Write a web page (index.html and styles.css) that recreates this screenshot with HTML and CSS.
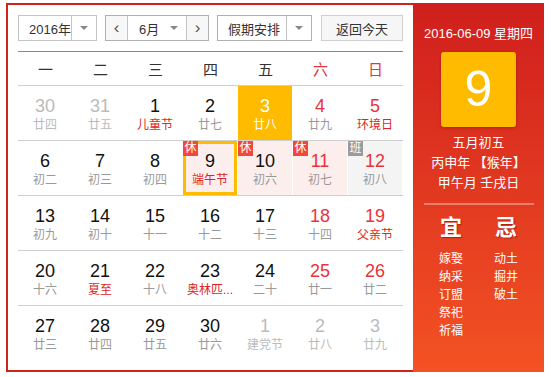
FILE: index.html
```html
<!DOCTYPE html>
<html lang="zh-CN">
    <head>
        <meta charset="utf-8">
        <title>万年历</title>
        <link rel="stylesheet" href="styles.css">
    </head>
    <body>
        <div class="calendar">
            <div class="main">
                <div class="toolbar">
                    <div class="select year">
                        <span class="select-text">2016年</span>
                        <span class="select-arrow"><i></i></span>
                    </div>
                    <div class="month-group">
                        <span class="nav-btn">&lsaquo;</span>
                        <div class="select month">
                            <span class="select-text">6月</span>
                            <span class="select-arrow plain"><i></i></span>
                        </div>
                        <span class="nav-btn">&rsaquo;</span>
                    </div>
                    <div class="select holiday">
                        <span class="select-text">假期安排</span>
                        <span class="select-arrow"><i></i></span>
                    </div>
                    <span class="today-btn">返回今天</span>
                </div>

                <div class="week-head">
                    <span>一</span><span>二</span><span>三</span><span>四</span><span>五</span>
                    <span class="red">六</span><span class="red">日</span>
                </div>

                <div class="week">
                    <div class="day other"><b>30</b><em>廿四</em></div>
                    <div class="day other"><b>31</b><em>廿五</em></div>
                    <div class="day"><b>1</b><em class="fest">儿童节</em></div>
                    <div class="day"><b>2</b><em>廿七</em></div>
                    <div class="day today"><b>3</b><em>廿八</em></div>
                    <div class="day weekend"><b>4</b><em>廿九</em></div>
                    <div class="day weekend"><b>5</b><em class="fest">环境日</em></div>
                </div>
                <div class="week">
                    <div class="day"><b>6</b><em>初二</em></div>
                    <div class="day"><b>7</b><em>初三</em></div>
                    <div class="day"><b>8</b><em>初四</em></div>
                    <div class="day rest selected"><span class="tag">休</span><b>9</b><em class="fest">端午节</em></div>
                    <div class="day rest"><span class="tag">休</span><b>10</b><em>初六</em></div>
                    <div class="day rest weekend"><span class="tag">休</span><b>11</b><em>初七</em></div>
                    <div class="day work weekend"><span class="tag gray">班</span><b>12</b><em>初八</em></div>
                </div>
                <div class="week">
                    <div class="day"><b>13</b><em>初九</em></div>
                    <div class="day"><b>14</b><em>初十</em></div>
                    <div class="day"><b>15</b><em>十一</em></div>
                    <div class="day"><b>16</b><em>十二</em></div>
                    <div class="day"><b>17</b><em>十三</em></div>
                    <div class="day weekend"><b>18</b><em>十四</em></div>
                    <div class="day weekend"><b>19</b><em class="fest">父亲节</em></div>
                </div>
                <div class="week">
                    <div class="day"><b>20</b><em>十六</em></div>
                    <div class="day"><b>21</b><em class="fest">夏至</em></div>
                    <div class="day"><b>22</b><em>十八</em></div>
                    <div class="day"><b>23</b><em class="fest">奥林匹...</em></div>
                    <div class="day"><b>24</b><em>二十</em></div>
                    <div class="day weekend"><b>25</b><em>廿一</em></div>
                    <div class="day weekend"><b>26</b><em>廿二</em></div>
                </div>
                <div class="week last">
                    <div class="day"><b>27</b><em>廿三</em></div>
                    <div class="day"><b>28</b><em>廿四</em></div>
                    <div class="day"><b>29</b><em>廿五</em></div>
                    <div class="day"><b>30</b><em>廿六</em></div>
                    <div class="day other"><b>1</b><em>建党节</em></div>
                    <div class="day other"><b>2</b><em>廿八</em></div>
                    <div class="day other"><b>3</b><em>廿九</em></div>
                </div>
            </div>

            <div class="side">
                <p class="side-date">2016-06-09 星期四</p>
                <div class="big-day">9</div>
                <p class="lunar">五月初五</p>
                <p class="lunar">丙申年 【猴年】</p>
                <p class="lunar">甲午月 壬戌日</p>
                <hr class="side-line">
                <div class="yiji">
                    <div class="yiji-col">
                        <h3>宜</h3>
                        <p>嫁娶</p><p>纳采</p><p>订盟</p><p>祭祀</p><p>祈福</p>
                    </div>
                    <div class="yiji-col">
                        <h3>忌</h3>
                        <p>动土</p><p>掘井</p><p>破土</p>
                    </div>
                </div>
            </div>
        </div>
    </body>
</html>
```

FILE: styles.css
```css
body{margin: 0; background: #fff; font-family: "Liberation Sans", "Noto Sans CJK SC", sans-serif; color: #333;}
p, h3{margin: 0;}

.calendar{display: flex; width: 538px; height: 369px; margin: 3px 0 0 6px; border: 2px solid #d0211b; box-sizing: border-box; box-shadow: 0 5px 0 #f4f4f4;}
.main{width: 385px; padding: 10px 10px 0 10px;}

/* toolbar */
.toolbar{display: flex; align-items: stretch; height: 26px; padding-bottom: 10px; border-bottom: 1px solid #e8625a;}
.select{display: flex; border: 1px solid #c4c4c4; box-sizing: border-box; font-size: 13px; color: #333; background: #fff;}
.select-text{flex: 1; display: flex; align-items: center; padding-left: 10px;}
.select-arrow{width: 24px; border-left: 1px solid #c4c4c4; display: flex; align-items: center; justify-content: center;}
.select-arrow.plain{border-left: none;}
.select-arrow i{width: 0; height: 0; border-left: 4px solid transparent; border-right: 4px solid transparent; border-top: 4px solid #888;}
.year{width: 79px;}
.month-group{display: flex; margin-left: 8px; border: 1px solid #b0b0b0; box-sizing: border-box; width: 104px;}
.month-group .select{border: none; flex: 1;}
.month .select-text{padding-left: 11px;}
.nav-btn{width: 22px; background: #f7f7f7; color: #555; font-size: 17px; display: flex; align-items: center; justify-content: center; border-right: 1px solid #c4c4c4; box-sizing: border-box;}
.nav-btn:last-child{border-right: none; border-left: 1px solid #c4c4c4;}
.holiday{width: 95px; margin-left: 8px; border-color: #b0b0b0;}
.holiday .select-arrow{border-left-color: #c4c4c4;}
.today-btn{margin-left: auto; width: 82px; border: 1px solid #cfcfcf; box-sizing: border-box; background: #f6f6f6; font-size: 13px; color: #333; display: flex; align-items: center; justify-content: center;}

/* grid */
.week-head{display: grid; grid-template-columns: repeat(7, 1fr); height: 33px; align-items: center; border-bottom: 1px solid #cfcfcf; font-size: 15px; color: #333; text-align: center;}
.red{color: #e8333a;}
.week{display: grid; grid-template-columns: repeat(7, 54px); column-gap: 1px; height: 54px; border-bottom: 1px solid #cfcfcf;}
.week.last{border-bottom: none;}
.day{position: relative; display: flex; flex-direction: column; align-items: center; padding-top: 9px; box-sizing: border-box;}
.day b{font-weight: normal; font-size: 18px; line-height: 22px; color: #111;}
.day em{font-style: normal; font-size: 12px; line-height: 16px; color: #999;}
.day em.fest{color: #e02424;}
.day.weekend b{color: #e8333a;}
.day.other b, .day.other em{color: #bbb;}
.day.today{background: #ffbb00;}
.day.today b, .day.today em{color: #fff;}
.day.rest{background: #fdeeee;}
.day.work{background: #f4f4f4;}
.day.selected{box-shadow: inset 0 0 0 3px #ffbb00;}
.tag{position: absolute; top: 0; left: 0; width: 15px; height: 15px; line-height: 15px; text-align: center; font-size: 12px; color: #fff; background: #f2483b;}
.tag.gray{background: #9a9a9a;}

/* side panel */
.side{flex: 1; margin: -2px -2px -2px 0; background: linear-gradient(#cf1f1d, #f35224); color: #fff; text-align: center; display: flex; flex-direction: column; align-items: center;}
.side-date{font-size: 13px; line-height: 16px; margin-top: 23px;}
.big-day{width: 75px; height: 75px; margin-top: 10px; background: #ffbb00; border-radius: 3px; box-shadow: 0 1px 3px rgba(120, 0, 0, 0.4); font-size: 50px; line-height: 75px;}
.lunar{font-size: 13px; line-height: 20px;}
.big-day + .lunar{margin-top: 6px;}
.side-line{width: 110px; margin: 10px 0 0 0; border: none; border-top: 2px solid rgba(255, 255, 255, 0.35);}
.yiji{display: flex; width: 110px; margin-top: 8px;}
.yiji-col{flex: 1;}
.yiji-col h3{font-size: 22px; line-height: 30px; font-weight: bold; text-shadow: 1px 1px 1px rgba(120, 0, 0, 0.5);}
.yiji-col p{font-size: 12px; line-height: 18px;}
.yiji-col h3 + p{margin-top: 7px;}
```
